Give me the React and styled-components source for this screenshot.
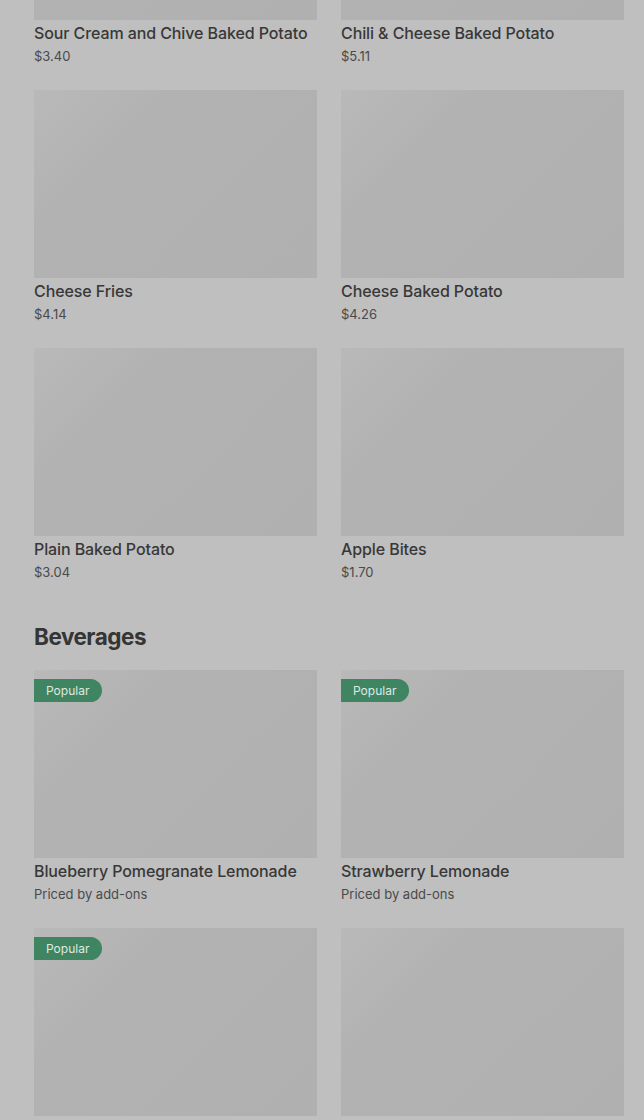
import styled, { createGlobalStyle } from "styled-components";

const GlobalStyle = createGlobalStyle`
  html, body {
    margin: 0;
    padding: 0;
    height: 1120px;
    overflow: hidden;
    background: #bfbfbf;
  }
  * { box-sizing: border-box; }
`;

const Page = styled.main`
  padding: 0 20px 0 34px;
  margin-top: -168px;
  font-family: Inter, "Noto Sans", sans-serif;
  color: #3a3a3a;
`;

const Section = styled.section`
  display: flex;
  flex-direction: column;
`;

const Heading = styled.h2`
  margin: 40px 0 18px;
  font-size: 22.5px;
  line-height: 30px;
  font-weight: 700;
  letter-spacing: -0.5px;
  color: #353535;
`;

const Grid = styled.div`
  display: grid;
  grid-template-columns: 1fr 1fr;
  column-gap: 24px;
  row-gap: 24px;
`;

const Card = styled.div`
  display: flex;
  flex-direction: column;
`;

const Thumb = styled.div`
  position: relative;
  height: 188px;
  background: linear-gradient(135deg, #b9b9b9 0%, #b2b2b2 30%, #b0b0b0 100%);
`;

const Badge = styled.span`
  position: absolute;
  top: 9px;
  left: 0;
  height: 23px;
  padding: 0 12px 0 12px;
  min-width: 68px;
  display: flex;
  align-items: center;
  background: #3f8561;
  color: #dfe9e3;
  font-size: 12px;
  border-radius: 0 12px 12px 0;
`;

const Title = styled.div`
  margin-top: 3px;
  font-size: 16px;
  line-height: 20px;
  font-weight: 500;
  letter-spacing: -0.1px;
  color: #383838;
`;

const Sub = styled.div`
  margin-top: 3px;
  font-size: 13px;
  line-height: 20px;
  color: #4a4a4a;
`;

const food = [
  { name: "Sour Cream and Chive Baked Potato", price: "$3.40" },
  { name: "Chili & Cheese Baked Potato", price: "$5.11" },
  { name: "Cheese Fries", price: "$4.14" },
  { name: "Cheese Baked Potato", price: "$4.26" },
  { name: "Plain Baked Potato", price: "$3.04" },
  { name: "Apple Bites", price: "$1.70" },
];

const drinks = [
  { name: "Blueberry Pomegranate Lemonade", price: "Priced by add-ons", popular: true },
  { name: "Strawberry Lemonade", price: "Priced by add-ons", popular: true },
  { name: "", price: "", popular: true },
  { name: "", price: "" },
];

const Item = ({ name, price, popular }) => (
  <Card>
    <Thumb>{popular && <Badge>Popular</Badge>}</Thumb>
    {name && <Title>{name}</Title>}
    {price && <Sub>{price}</Sub>}
  </Card>
);

export default function App() {
  return (
    <>
      <GlobalStyle />
      <Page>
        <Section>
          <Grid>
            {food.map((f) => (
              <Item key={f.name} {...f} />
            ))}
          </Grid>
        </Section>
        <Section>
          <Heading>Beverages</Heading>
          <Grid>
            {drinks.map((d, i) => (
              <Item key={i} {...d} />
            ))}
          </Grid>
        </Section>
      </Page>
    </>
  );
}
